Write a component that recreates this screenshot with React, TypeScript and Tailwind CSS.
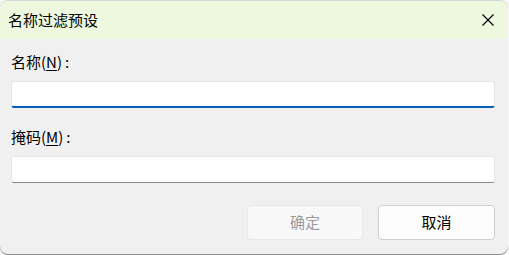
import React from 'react';

const font = { fontFamily: '"Microsoft YaHei UI", "Noto Sans CJK SC", "Noto Sans", sans-serif' };

const Field: React.FC<{ label: string; hotkey: string; focused?: boolean; className?: string }> = ({ label, hotkey, focused, className }) => (
  <div className={className}>
    <div className="h-[20px] text-[15px] leading-[20px] text-black">
      {label}(<span className="underline underline-offset-2">{hotkey}</span>)<span className="ml-[3px]">:</span>
    </div>
    <div
      className={`mt-[9px] h-[27px] bg-white rounded-[3px] border border-[#e5e5e5] ${focused ? 'border-b-2 border-b-[#005fb8]' : 'border-b-[#8a8a8a]'}`}
    />
  </div>
);

export default function App() {
  return (
    <div className="w-[509px] h-[255px] bg-[#f7f7f7]" style={font}>
      <div className="w-[508px] h-[254px] bg-[#f0f0f0] rounded-[8px] overflow-hidden flex flex-col border-t border-t-[#d8d8d8] shadow-[0_1px_0_#8c8c8c]">
        <div className="h-[38px] shrink-0 bg-[#eef8de] flex items-center justify-between pl-[8px] pr-[14px]">
          <span className="text-[15px] text-black leading-[20px]">名称过滤预设</span>
          <svg width="12" height="12" viewBox="0 0 12 12" className="text-black">
            <path d="M0.5 0.5 L11.5 11.5 M11.5 0.5 L0.5 11.5" stroke="currentColor" strokeWidth="1.1" fill="none" />
          </svg>
        </div>
        <div className="flex flex-col px-[11px] pr-[13px] pt-[13px]">
          <Field label="名称" hotkey="N" focused />
          <Field label="掩码" hotkey="M" className="mt-[19px]" />
          <div className="flex justify-end gap-[15px] mt-[22px]">
            <button className="w-[116px] h-[35px] rounded-[4px] bg-[#f8f8f8] border border-[#e8e8e8] text-[15px] text-[#9a9a9a]">
              确定
            </button>
            <button className="w-[117px] h-[35px] rounded-[4px] bg-[#fdfdfd] border border-[#cfcfcf] text-[15px] text-black">
              取消
            </button>
          </div>
        </div>
      </div>
    </div>
  );
}
